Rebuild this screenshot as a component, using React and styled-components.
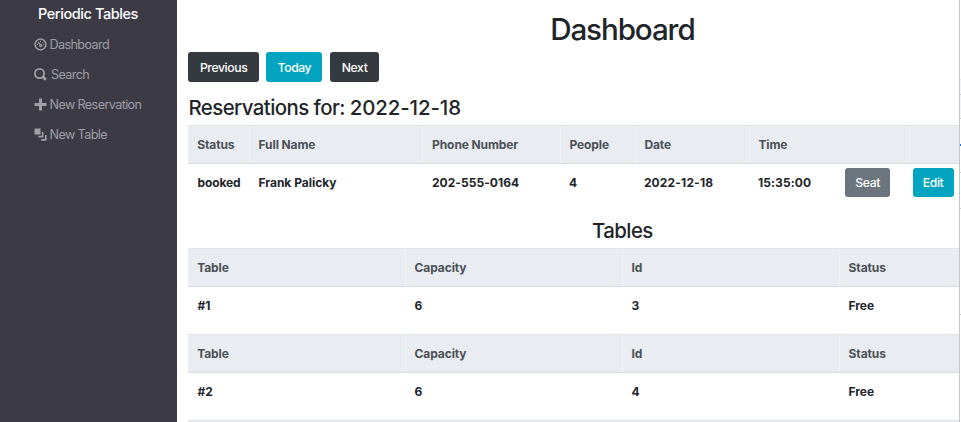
import React from "react";
import styled, { createGlobalStyle } from "styled-components";

const Global = createGlobalStyle`
  * { box-sizing: border-box; }
  body { margin: 0; background: #fff; color: #212529; font-family: Inter, "Liberation Sans", sans-serif; font-size: 12px; overflow: hidden; }
`;

const Page = styled.div`
  display: grid;
  grid-template-columns: 177.4px 781.6px 2px;
  height: 422px;
  overflow: hidden;
`;
const Sidebar = styled.nav`
  background: #3b3a45;
  padding: 4px 0 0 34px;
`;
const Brand = styled.div`
  color: #fff;
  font-size: 14.5px;
  line-height: 20px;
  font-weight: 500;
  padding-left: 4px;
  letter-spacing: -0.43px;
  white-space: nowrap;
`;
const Menu = styled.ul`
  list-style: none;
  margin: 5px 0 0;
  padding: 0;
`;
const MenuItem = styled.li`
  display: flex;
  align-items: center;
  height: 30px;
  color: #a09fa5;
  font-size: 12.6px;
  gap: ${(p) => p.$gap || 2.5}px;
  letter-spacing: -0.6px;
  white-space: nowrap;
  svg { width: 13px; height: 13px; flex: none; }
`;
const Main = styled.main`
  padding: 11px 0 0 11px;
  overflow: hidden;
`;
const Content = styled.div`
  width: 868px;
`;
const Title = styled.h1`
  margin: 0;
  text-align: center;
  font-size: 29.6px;
  line-height: 36px;
  font-weight: 500;
  letter-spacing: -1.1px;
`;
const Toolbar = styled.div`
  display: flex;
  gap: 7.5px;
  margin-top: 5px;
`;
const tones = { dark: "#343a40", info: "#02a4bf", muted: "#6c757d" };
const Button = styled.button`
  display: block;
  border: 0;
  border-radius: 3px;
  padding: 0;
  width: ${(p) => p.$w}px;
  height: ${(p) => p.$h || 30}px;
  background: ${(p) => tones[p.$tone]};
  color: #fff;
  font: 500 12.2px Inter, sans-serif;
  letter-spacing: -0.4px;
`;
const Heading = styled.h4`
  margin: 0;
  font-size: 20.4px;
  line-height: 26px;
  font-weight: 500;
  letter-spacing: -0.55px;
  text-align: ${(p) => (p.$center ? "center" : "left")};
  padding: ${(p) => (p.$center ? "17px 0 4.5px" : "13px 0 4px")};
`;
const HeadingDate = styled.span`
  letter-spacing: -0.1px;
`;
const Row = styled.div`
  display: grid;
  grid-template-columns: ${(p) => p.$cols};
  height: ${(p) => p.$h}px;
`;
const HeadRow = styled(Row)`
  height: 38.5px;
  background: #e9ecf0;
  border-top: 1px solid #e1e5e9;
  border-bottom: 1px solid #d8dde2;
  color: #495057;
`;
const HeadCell = styled.div`
  padding-left: ${(p) => (p.$rule ? 8.7 : 8.8)}px;
  border-left: ${(p) => (p.$rule ? "1px solid #f0f2f4" : "0")};
  line-height: 37px;
  font-size: 12px;
  font-weight: 700;
  letter-spacing: -0.1px;
  white-space: nowrap;
  & + & { margin-left: -0.5px; }
`;
const Cell = styled.div`
  padding-left: 9px;
  line-height: 37px;
  font-size: 12px;
  font-weight: 700;
  white-space: nowrap;
  letter-spacing: ${(p) => p.$track || 0}px;
`;
const Action = styled.div`
  padding: 4px 0 0 ${(p) => p.$left}px;
`;
const Edge = styled.div`
  background: #fff;
  border-left: 1px solid #c4c5ca;
  display: grid;
  grid-template-rows: 80px 15px 24px 25px 2px 27px 36px 106px 1fr;
`;
const EdgeMark = styled.span`
  background: ${(p) => p.$bg || "#fff"};
  border-bottom: 1px solid ${(p) => p.$line || "#c8cace"};
`;

const bookingCols = "61px 173.5px 137px 75px 114px 87px 73px 127px";
const bookingHead = "61px 173.5px 137.3px 75px 114px 160px 1fr";
const seating = "217px 217px 217px 217px";
const bookingTracks = [-0.08, 0, 0.06, 0, 0.16, 0.1];

const Icon = ({ children }) => (
  <svg viewBox="0 0 13 13" fill="none" stroke="currentColor">{children}</svg>
);

function Seating({ name, id }) {
  return (
    <>
      <HeadRow $cols={seating}>
        {["Table", "Capacity", "Id", "Status"].map((t, i) => (
          <HeadCell key={t} $rule={i > 0}>{t}</HeadCell>
        ))}
      </HeadRow>
      <Row $cols={seating} $h={47.5}>
        {[name, "6", id, "Free"].map((t, i) => <Cell key={i}>{t}</Cell>)}
      </Row>
    </>
  );
}

export default function App() {
  return (
    <>
      <Global />
      <Page>
        <Sidebar>
          <Brand>Periodic Tables</Brand>
          <Menu>
            <MenuItem>
              <Icon>
                <circle cx="6.5" cy="6.5" r="5.4" strokeWidth="1.5" />
                <path d="M4 4.2 6.8 7" strokeWidth="1.3" />
                <circle cx="6.8" cy="7.6" r="1.1" strokeWidth="1.2" />
                <path d="M3 6.5h1M6 3.4h1M8.5 4.7h1M9.2 6.8h1" strokeWidth="1.1" />
              </Icon>
              Dashboard
            </MenuItem>
            <MenuItem $gap={4}>
              <Icon>
                <circle cx="5.5" cy="5.5" r="4.6" strokeWidth="1.8" />
                <path d="m8.8 8.8 3 3" strokeWidth="2.8" />
              </Icon>
              Search
            </MenuItem>
            <MenuItem>
              <Icon><path d="M6.5.5v12M.5 6.5h12" strokeWidth="3" /></Icon>
              New Reservation
            </MenuItem>
            <MenuItem>
              <Icon>
                <path d="M.5.5h6v6h-6z" fill="currentColor" stroke="none" />
                <path d="M8.6 4v4.6H4.3M11.8 7v4.8H7.2" strokeWidth="1.7" />
              </Icon>
              New Table
            </MenuItem>
          </Menu>
        </Sidebar>
        <Main>
          <Content>
            <Title>Dashboard</Title>
            <Toolbar>
              <Button $tone="dark" $w={70.5}>Previous</Button>
              <Button $tone="info" $w={56}>Today</Button>
              <Button $tone="dark" $w={49.5}>Next</Button>
            </Toolbar>
            <Heading>Reservations for: <HeadingDate>2022-12-18</HeadingDate></Heading>
            <HeadRow $cols={bookingHead}>
              {["Status", "Full Name", "Phone Number", "People", "Date", "Time", ""].map((t, i) => (
                <HeadCell key={i} $rule={i > 0}>{t}</HeadCell>
              ))}
            </HeadRow>
            <Row $cols={bookingCols} $h={37}>
              {["booked", "Frank Palicky", "202-555-0164", "4", "2022-12-18", "15:35:00"].map((t, i) => (
                <Cell key={t} $track={bookingTracks[i]}>{t}</Cell>
              ))}
              <Action $left={9.5}><Button $tone="muted" $w={44.5} $h={29}>Seat</Button></Action>
              <Action $left={3.7}><Button $tone="info" $w={41} $h={29}>Edit</Button></Action>
            </Row>
            <Heading $center>Tables</Heading>
            <Seating name="#1" id="3" />
            <Seating name="#2" id="4" />
            <HeadRow $cols={seating} />
          </Content>
        </Main>
        <Edge>
          <EdgeMark $line="#e4e6e8" />
          <EdgeMark $bg="#f1f3f4" />
          <EdgeMark $bg="#f1f3f4" />
          <EdgeMark $line="#fff" />
          <EdgeMark $bg="#1a73e8" $line="#1a73e8" />
          <EdgeMark />
          <EdgeMark />
          <EdgeMark />
        </Edge>
      </Page>
    </>
  );
}
